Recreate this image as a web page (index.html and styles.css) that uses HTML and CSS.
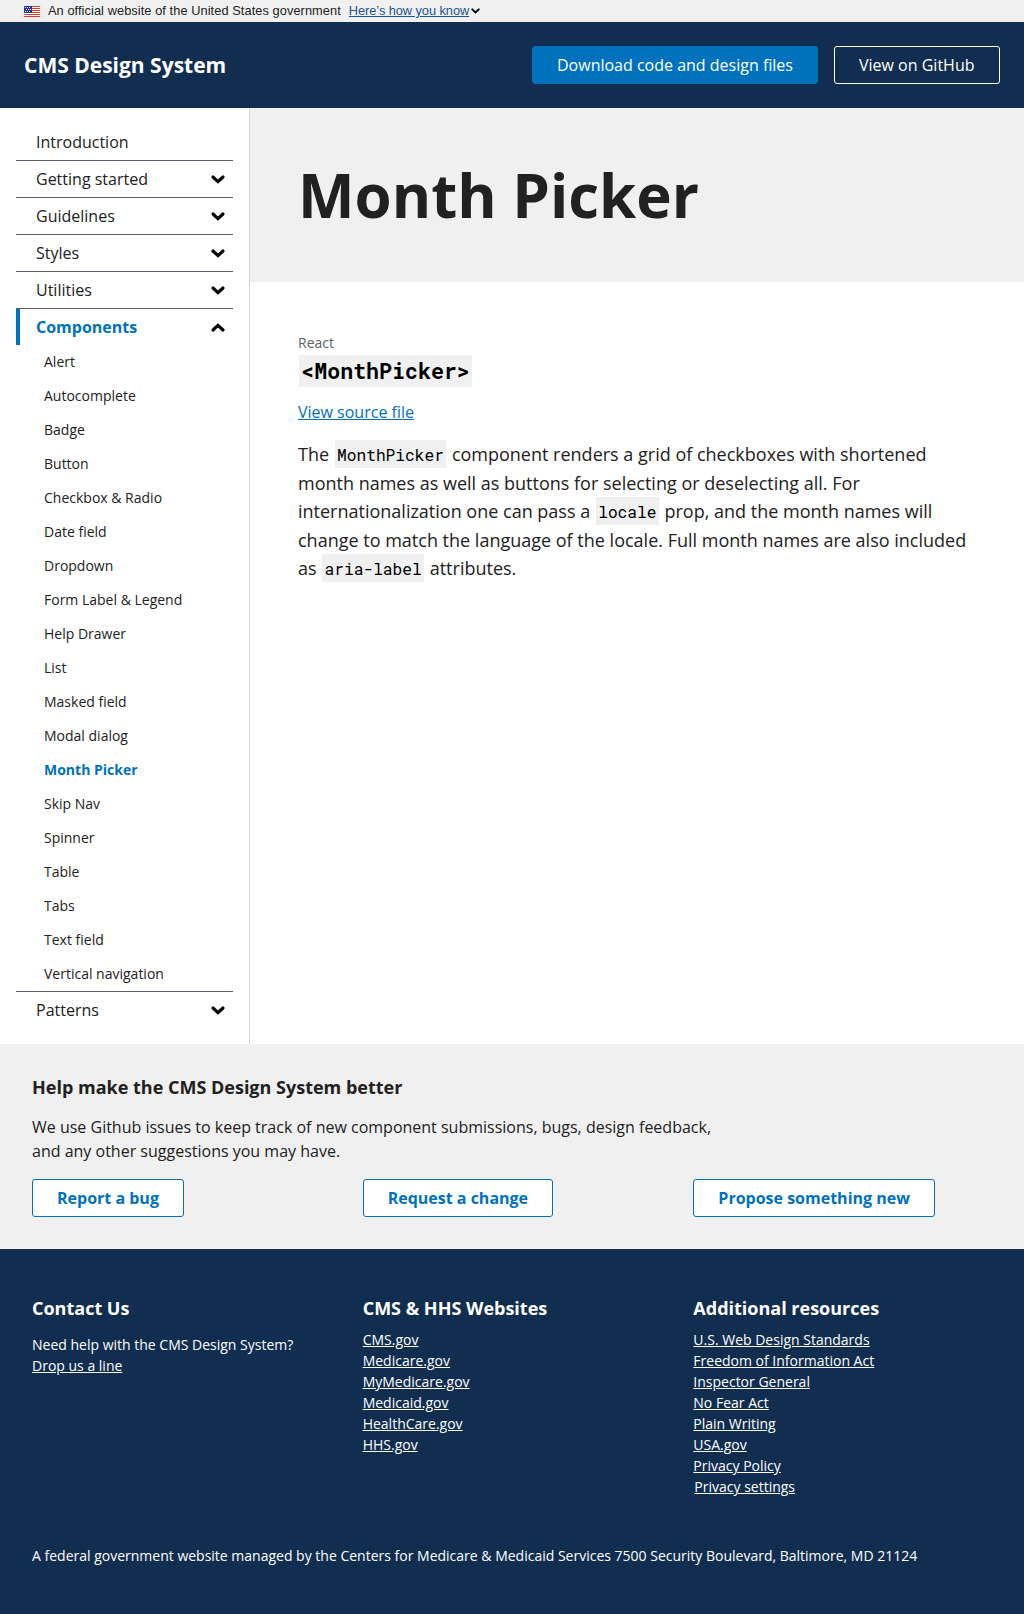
FILE: index.html
```html
<!DOCTYPE html>
<html lang="en">
<head>
<meta charset="utf-8">
<title>Month Picker - CMS Design System</title>
<link rel="stylesheet" href="styles.css">
</head>
<body>
<svg class="symbols" aria-hidden="true">
  <symbol id="chevron" viewBox="0 0 14 9"><path d="M2 2l5 4.7L12 2" fill="none" stroke="#000" stroke-width="3.1" stroke-linecap="round"/></symbol>
</svg>
<div class="banner">
  <svg class="flag" viewBox="0 0 16 11" shape-rendering="crispEdges">
    <path fill="#fff" d="M0 0h16v11H0z"/>
    <path fill="#db3e1f" d="M0 0h16v1H0zM0 2h16v1H0zM0 4h16v1H0zM0 6h16v1H0zM0 8h16v1H0zM0 10h16v1H0z"/>
    <path fill="#1e33b1" d="M0 0h8v7H0z"/>
    <path fill="#fff" d="M1 1h1v1H1zM3 1h1v1H3zM5 1h1v1H5zM2 3h1v1H2zM4 3h1v1H4zM6 3h1v1H6zM1 5h1v1H1zM3 5h1v1H3zM5 5h1v1H5z"/>
  </svg>
  <span class="banner-text">An official website of the United States government</span>
  <a class="banner-link" href="#">Here’s how you know</a>
  <svg class="banner-chevron"><use href="#chevron"/></svg>
</div>
<header class="header">
  <span class="brand">CMS Design System</span>
  <a class="button button-primary" href="#">Download code and design files</a>
  <a class="button button-inverse" href="#">View on GitHub</a>
</header>
<div class="layout">
  <nav class="sidebar">
    <a class="nav-item" href="#">Introduction</a>
    <a class="nav-item" href="#">Getting started<svg class="chevron"><use href="#chevron"/></svg></a>
    <a class="nav-item" href="#">Guidelines<svg class="chevron"><use href="#chevron"/></svg></a>
    <a class="nav-item" href="#">Styles<svg class="chevron"><use href="#chevron"/></svg></a>
    <a class="nav-item" href="#">Utilities<svg class="chevron"><use href="#chevron"/></svg></a>
    <div class="nav-group">
      <a class="nav-item nav-open" href="#">Components<svg class="chevron chevron-up"><use href="#chevron"/></svg></a>
      <a class="sub-item" href="#">Alert</a>
      <a class="sub-item" href="#">Autocomplete</a>
      <a class="sub-item" href="#">Badge</a>
      <a class="sub-item" href="#">Button</a>
      <a class="sub-item" href="#">Checkbox &amp; Radio</a>
      <a class="sub-item" href="#">Date field</a>
      <a class="sub-item" href="#">Dropdown</a>
      <a class="sub-item" href="#">Form Label &amp; Legend</a>
      <a class="sub-item" href="#">Help Drawer</a>
      <a class="sub-item" href="#">List</a>
      <a class="sub-item" href="#">Masked field</a>
      <a class="sub-item" href="#">Modal dialog</a>
      <a class="sub-item sub-current" href="#">Month Picker</a>
      <a class="sub-item" href="#">Skip Nav</a>
      <a class="sub-item" href="#">Spinner</a>
      <a class="sub-item" href="#">Table</a>
      <a class="sub-item" href="#">Tabs</a>
      <a class="sub-item" href="#">Text field</a>
      <a class="sub-item" href="#">Vertical navigation</a>
    </div>
    <a class="nav-item nav-last" href="#">Patterns<svg class="chevron"><use href="#chevron"/></svg></a>
  </nav>
  <main class="main">
    <div class="hero"><h1>Month Picker</h1></div>
    <div class="content">
      <div class="eyebrow">React</div>
      <h2 class="component-name"><code>&lt;MonthPicker&gt;</code></h2>
      <a class="source-link" href="#">View source file</a>
      <p class="description">The <code>MonthPicker</code> component renders a grid of checkboxes with shortened month names as well as buttons for selecting or deselecting all. For internationalization one can pass a <code>locale</code> prop, and the month names will change to match the language of the locale. Full month names are also included as <code>aria-label</code> attributes.</p>
    </div>
  </main>
</div>
<section class="feedback">
  <h2>Help make the CMS Design System better</h2>
  <p>We use Github issues to keep track of new component submissions, bugs, design feedback, and any other suggestions you may have.</p>
  <div class="columns">
    <div><a class="button button-outline" href="#">Report a bug</a></div>
    <div><a class="button button-outline" href="#">Request a change</a></div>
    <div><a class="button button-outline" href="#">Propose something new</a></div>
  </div>
</section>
<footer class="footer">
  <div class="columns footer-columns">
    <div>
      <h3>Contact Us</h3>
      <p class="contact">Need help with the CMS Design System?<br><a href="#">Drop us a line</a></p>
    </div>
    <div>
      <h3>CMS &amp; HHS Websites</h3>
      <ul>
        <li><a href="#">CMS.gov</a></li>
        <li><a href="#">Medicare.gov</a></li>
        <li><a href="#">MyMedicare.gov</a></li>
        <li><a href="#">Medicaid.gov</a></li>
        <li><a href="#">HealthCare.gov</a></li>
        <li><a href="#">HHS.gov</a></li>
      </ul>
    </div>
    <div>
      <h3>Additional resources</h3>
      <ul>
        <li><a href="#">U.S. Web Design Standards</a></li>
        <li><a href="#">Freedom of Information Act</a></li>
        <li><a href="#">Inspector General</a></li>
        <li><a href="#">No Fear Act</a></li>
        <li><a href="#">Plain Writing</a></li>
        <li><a href="#">USA.gov</a></li>
        <li><a href="#">Privacy Policy</a></li>
        <li class="settings"><a href="#">Privacy settings</a></li>
      </ul>
    </div>
  </div>
  <p class="address">A federal government website managed by the Centers for Medicare &amp; Medicaid Services 7500 Security Boulevard, Baltimore, MD 21124</p>
</footer>
</body>
</html>
```
FILE: styles.css
```css
* { box-sizing: border-box; }
body {
  margin: 0;
  color: #212121;
  background: #fff;
  font: 16px/24px "Open Sans", sans-serif;
}
h1, h2, h3, p, ul { margin: 0; padding: 0; }
ul { list-style: none; }
.symbols { display: none; }

.banner {
  display: flex;
  align-items: center;
  height: 22px;
  padding: 0 24px;
  background: #f0f0f0;
  font: 12.8px/20px "Liberation Sans", Arial, sans-serif;
}
.flag { width: 16px; height: 11px; margin-right: 8px; }
.banner-text { margin-right: 8px; letter-spacing: 0.07px; }
.banner-link { color: #205493; letter-spacing: -0.06px; }
.banner-chevron { width: 9px; height: 6px; margin-left: 2px; }

.header {
  display: flex;
  align-items: center;
  gap: 16px;
  height: 86px;
  padding: 0 24px;
  background: #112e51;
}
.brand { margin-right: auto; color: #fff; font-size: 21px; font-weight: 700; }

.button {
  display: inline-block;
  padding: 6px 24px;
  border: 1px solid #0071bc;
  border-radius: 3px;
  text-decoration: none;
}
.button-primary { min-width: 286px; color: #fff; background: #0071bc; }
.button-inverse { min-width: 166px; color: #fff; border-color: #fff; }
.button-outline { color: #0071bc; background: #fff; font-weight: 700; }

.layout { display: flex; height: 936px; }
.sidebar {
  width: 250px;
  padding: 16px;
  border-right: 1px solid #d6d7d9;
}
.nav-item {
  display: flex;
  align-items: center;
  justify-content: space-between;
  height: 37px;
  padding: 0 8px 0 20px;
  border-bottom: 1px solid #5b616b;
  color: #212121;
  text-decoration: none;
}
.nav-group { border-bottom: 1px solid #5b616b; }
.nav-open {
  height: 36px;
  padding-left: 16px;
  border-bottom: 0;
  border-left: 4px solid #0071bc;
  color: #0071bc;
  font-weight: 700;
}
.nav-last { height: 36px; border-bottom: 0; }
.chevron { width: 14px; height: 9px; }
.chevron-up { transform: rotate(180deg); }
.sub-item {
  display: block;
  padding-left: 28px;
  color: #212121;
  font-size: 14px;
  line-height: 34px;
  text-decoration: none;
}
.sub-current { color: #0071bc; font-weight: 700; }

.main { flex: 1; }
.hero { height: 174px; padding: 48px; background: #f0f0f0; }
.hero h1 { font-size: 60px; line-height: 78px; }
.content { padding: 50px 48px 0; }
.eyebrow { color: #5b616b; font-size: 14px; line-height: 21px; }
code {
  padding: 4px 2.3px 3px;
  margin: 0 1px;
  color: #000;
  background: #f0f0f0;
  font-family: "Roboto Mono", "DejaVu Sans Mono", monospace;
  font-size: 0.9em;
  line-height: 1;
}
.component-name { font-size: 24px; line-height: 34px; }
.component-name code { padding: 1px 2.3px 2px; }
.source-link { display: inline-block; margin-top: 13px; color: #0071bc; }
.description { margin-top: 16px; font-size: 18px; line-height: 28.5px; }

.feedback { height: 205px; padding: 31px 32px 0; background: #f0f0f0; }
.feedback h2 { font-size: 18px; line-height: 24px; }
.feedback p { width: 700px; margin: 16px 0; }
.columns { display: grid; grid-template-columns: repeat(3, 1fr); gap: 32px; }

.footer {
  height: 365px;
  padding: 47px 32px 0;
  color: #fff;
  background: #112e51;
  font-size: 14px;
  line-height: 21px;
}
.footer a { color: #fff; }
.footer h3 { margin-bottom: 9px; font-size: 18px; line-height: 24px; }
.footer-columns { height: 249px; }
.contact { padding-top: 5px; }
.settings { padding-left: 1px; }
```
